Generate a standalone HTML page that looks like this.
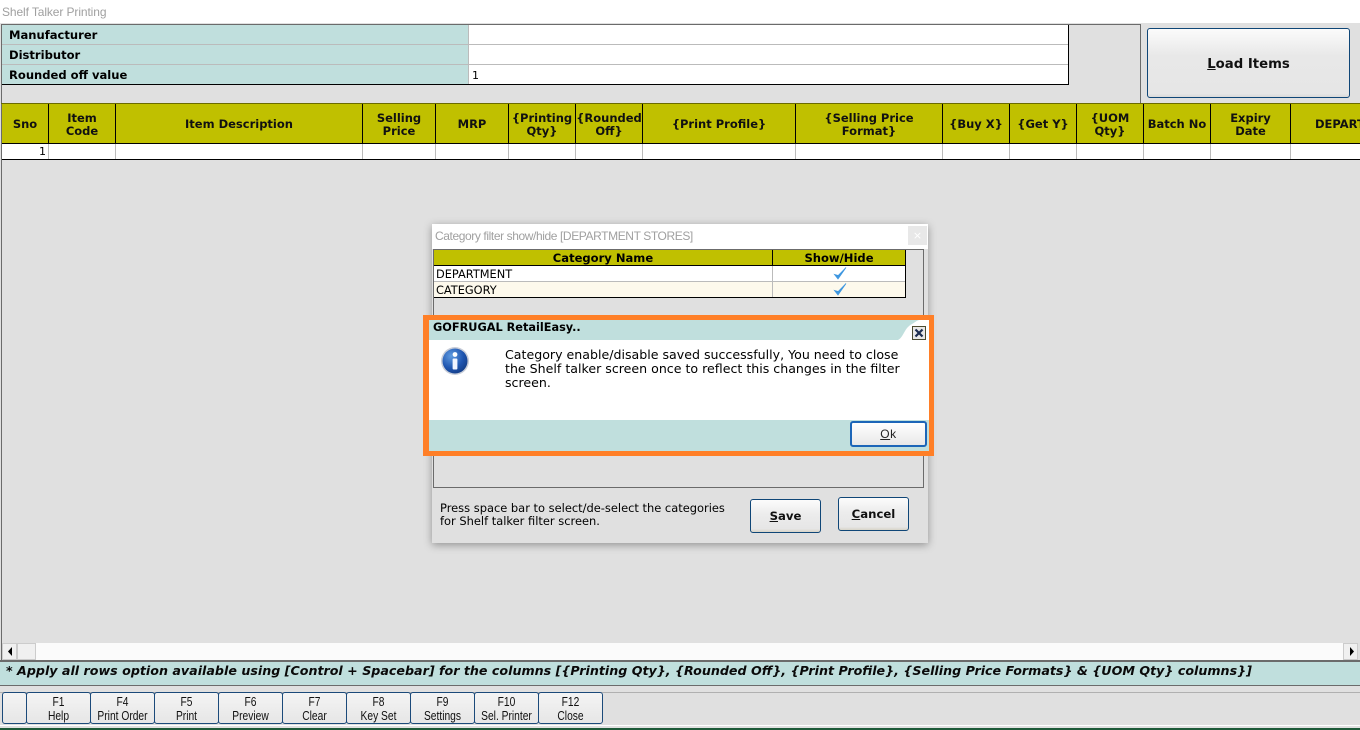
<!DOCTYPE html>
<html><head><meta charset="utf-8"><title>Shelf Talker Printing</title>
<style>
html,body{margin:0;padding:0;width:1360px;height:730px;overflow:hidden;background:#e0e0e0}
body{position:relative;font-family:"DejaVu Sans","Liberation Sans",sans-serif;color:#000}
.a{position:absolute;box-sizing:border-box}
.t{position:absolute;white-space:nowrap;line-height:14px}
.b{font-weight:bold;font-size:11.55px}
.c{text-align:center}
.h{position:absolute;top:104px;display:flex;align-items:center;justify-content:center;text-align:center;font-weight:bold;font-size:11.5px;line-height:13px;padding-top:2px;border-right:1px solid #000;box-sizing:content-box;white-space:nowrap;overflow:hidden;color:#111;height:37px}
.cell{position:absolute;top:144px;height:15px;background:#fff;border-right:1px solid #bbb}
.fk{position:absolute;top:692px;height:32px;width:65px;box-sizing:border-box;border:1px solid #1b4a7a;border-radius:3px;background:linear-gradient(#f4f4f4,#e6e6e6);font-family:"Liberation Sans",sans-serif;font-size:12.5px;line-height:14px;text-align:center;padding-top:2px;color:#111;white-space:nowrap}
.fk span{display:block;transform:scaleX(.82);transform-origin:center}
.btn{position:absolute;box-sizing:border-box;border:1px solid #0f4677;border-radius:3px;background:linear-gradient(#fcfcfc,#ececec 45%,#e6e6e6 90%,#d8d4c8);display:flex;align-items:center;justify-content:center;font-weight:bold;font-size:11.7px;color:#111}
</style></head><body>
<div class="a" style="left:0;top:0;width:1360px;height:23px;background:#fff"></div>
<div class="t" style="left:2px;top:5px;font-family:'Liberation Sans',sans-serif;font-size:12px;letter-spacing:-.1px;color:#a0a0a0">Shelf Talker Printing</div>

<div class="a" style="left:1px;top:24px;width:1140px;height:1px;background:#6b6b6b"></div>
<div class="a" style="left:1px;top:24px;width:1px;height:637px;background:#6b6b6b"></div>
<div class="a" style="left:1140px;top:24px;width:1px;height:79px;background:#6b6b6b"></div>

<div class="a" style="left:2px;top:25px;width:466px;height:59px;background:#c0dfdd"></div>
<div class="a" style="left:469px;top:25px;width:599px;height:59px;background:#fff"></div>
<div class="a" style="left:2px;top:44px;width:1066px;height:1px;background:#bbb"></div>
<div class="a" style="left:2px;top:64px;width:1066px;height:1px;background:#bbb"></div>
<div class="a" style="left:468px;top:25px;width:1px;height:59px;background:#bbb"></div>
<div class="a" style="left:2px;top:84px;width:1067px;height:1px;background:#000"></div>
<div class="a" style="left:1068px;top:25px;width:1px;height:60px;background:#000"></div>
<div class="t b" style="left:9px;top:28px;line-height:15px">Manufacturer</div>
<div class="t b" style="left:9px;top:48px;line-height:15px">Distributor</div>
<div class="t b" style="left:9px;top:68px;line-height:15px">Rounded off value</div>
<div class="t" style="left:472px;top:69px;font-size:11px">1</div>

<div class="btn" style="left:1147px;top:28px;width:203px;height:70px;font-size:13.25px;padding-top:2px;background:linear-gradient(#fbfbfb,#e8e8e8 40%,#e6e6e6 95%,#d9d9d9)"><span><u>L</u>oad Items</span></div>

<div class="a" style="left:1px;top:103px;width:1359px;height:1px;background:#6b6b00"></div>
<div class="a" style="left:2px;top:104px;width:1358px;height:39px;background:#c0c000"></div>
<div class="a" style="left:2px;top:143px;width:1358px;height:1px;background:#000"></div>
<div class="a" style="left:2px;top:159px;width:1358px;height:1px;background:#000"></div>
<div class="a" style="left:2px;top:144px;width:1358px;height:15px;background:#fff"></div>

<div class="h" style="left:2px;width:46px">Sno</div>
<div class="h" style="left:49px;width:66px">Item<br>Code</div>
<div class="h" style="left:116px;width:246px">Item Description</div>
<div class="h" style="left:363px;width:72px">Selling<br>Price</div>
<div class="h" style="left:436px;width:72px">MRP</div>
<div class="h" style="left:509px;width:66px">{Printing<br>Qty}</div>
<div class="h" style="left:576px;width:66px">{Rounded<br>Off}</div>
<div class="h" style="left:643px;width:152px">{Print Profile}</div>
<div class="h" style="left:796px;width:146px">{Selling Price<br>Format}</div>
<div class="h" style="left:943px;width:66px">{Buy X}</div>
<div class="h" style="left:1010px;width:66px">{Get Y}</div>
<div class="h" style="left:1077px;width:66px">{UOM<br>Qty}</div>
<div class="h" style="left:1144px;width:66px">Batch No</div>
<div class="h" style="left:1211px;width:79px">Expiry<br>Date</div>
<div class="h" style="left:1291px;width:69px;border-right:0;justify-content:flex-start;padding-left:24px;box-sizing:border-box;height:39px">DEPARTMENT</div>

<div class="cell" style="left:2px;width:46px"></div>
<div class="cell" style="left:49px;width:66px"></div>
<div class="cell" style="left:116px;width:246px"></div>
<div class="cell" style="left:363px;width:72px"></div>
<div class="cell" style="left:436px;width:72px"></div>
<div class="cell" style="left:509px;width:66px"></div>
<div class="cell" style="left:576px;width:66px"></div>
<div class="cell" style="left:643px;width:152px"></div>
<div class="cell" style="left:796px;width:146px"></div>
<div class="cell" style="left:943px;width:66px"></div>
<div class="cell" style="left:1010px;width:66px"></div>
<div class="cell" style="left:1077px;width:66px"></div>
<div class="cell" style="left:1144px;width:66px"></div>
<div class="cell" style="left:1211px;width:79px"></div>
<div class="t" style="left:39px;top:145px;font-size:11px">1</div>

<!-- Category dialog -->
<div class="a" style="left:432px;top:224px;width:496px;height:319px;background:#e0e0e0;box-shadow:0 2px 8px rgba(0,0,0,.35)"></div>
<div class="a" style="left:432px;top:224px;width:496px;height:25px;background:#fff"></div>
<div class="t" style="left:435px;top:229px;font-family:'Liberation Sans',sans-serif;font-size:12px;letter-spacing:-.4px;color:#a0a0a0">Category filter show/hide [DEPARTMENT STORES]</div>
<div class="a" style="left:908px;top:226px;width:19px;height:19px;background:#e8e8e8;color:#fff;font-size:11px;text-align:center;line-height:19px">×</div>
<div class="a" style="left:433px;top:249px;width:491px;height:239px;border:1px solid #6b6b6b"></div>
<div class="a" style="left:434px;top:250px;width:472px;height:15px;background:#c0c000"></div>
<div class="a" style="left:434px;top:265px;width:472px;height:1px;background:#000"></div>
<div class="a" style="left:434px;top:266px;width:472px;height:16px;background:#fff;border-bottom:1px solid #bbb"></div>
<div class="a" style="left:434px;top:282px;width:472px;height:15px;background:#fdf9ec"></div>
<div class="a" style="left:434px;top:297px;width:472px;height:1px;background:#000"></div>
<div class="a" style="left:905px;top:250px;width:1px;height:48px;background:#000"></div>
<div class="a" style="left:772px;top:250px;width:1px;height:15px;background:#000"></div>
<div class="a" style="left:772px;top:266px;width:1px;height:31px;background:#bbb"></div>
<div class="t b c" style="left:434px;top:251px;width:338px;line-height:15px">Category Name</div>
<div class="t b c" style="left:773px;top:251px;width:132px;line-height:15px">Show/Hide</div>
<div class="t" style="left:436px;top:267px;font-size:11.35px;line-height:15px">DEPARTMENT</div>
<div class="t" style="left:436px;top:283px;font-size:11.35px;line-height:15px">CATEGORY</div>
<svg class="a" style="left:833px;top:266px" width="14" height="15" viewBox="0 0 14 15"><path d="M1.5 8.5 L5 13 L13 1.5 L5.2 9.5 Z" fill="#3f97e0" stroke="#3f97e0" stroke-width=".8"/></svg>
<svg class="a" style="left:833px;top:282px" width="14" height="15" viewBox="0 0 14 15"><path d="M1.5 8.5 L5 13 L13 1.5 L5.2 9.5 Z" fill="#3f97e0" stroke="#3f97e0" stroke-width=".8"/></svg>

<div class="t" style="left:440px;top:501px;font-size:11.45px">Press space bar to select/de-select the categories</div>
<div class="t" style="left:440px;top:514px;font-size:11.45px">for Shelf talker filter screen.</div>
<div class="btn" style="left:750px;top:499px;width:71px;height:34px"><span><u>S</u>ave</span></div>
<div class="btn" style="left:838px;top:497px;width:71px;height:34px"><span><u>C</u>ancel</span></div>

<!-- Message box -->
<div class="a" style="left:423px;top:315px;width:511px;height:141px;border:5px solid #ff7f27;background:#fff;border-left-width:6px"></div>
<div class="a" style="left:429px;top:320px;width:500px;height:20px;background:#c0dfdd"></div>
<svg class="a" style="left:895px;top:320px" width="34" height="20" viewBox="0 0 34 20"><path d="M3 20 C9 17 9 8 17 4 C19 3 21 1 24 0 L34 0 L34 20 Z" fill="#fff"/></svg>
<div class="t b" style="left:433px;top:320px;line-height:15px;font-size:11.3px">GOFRUGAL RetailEasy..</div>
<svg class="a" style="left:912px;top:326px" width="14" height="14" viewBox="0 0 14 14"><rect x=".5" y=".5" width="13" height="13" fill="#e8e8e8" stroke="#4a4a30"/><path d="M3.5 3.5 L10.5 10.5 M10.5 3.5 L3.5 10.5" stroke="#1c2c50" stroke-width="2.2"/></svg>
<svg class="a" style="left:440px;top:346px" width="30" height="30" viewBox="0 0 30 30"><defs><radialGradient id="g" cx=".35" cy=".3" r=".8"><stop offset="0" stop-color="#5f9be0"/><stop offset=".6" stop-color="#1f55b0"/><stop offset="1" stop-color="#123a80"/></radialGradient></defs><circle cx="15" cy="15" r="14" fill="#c8cdd8"/><circle cx="15" cy="15" r="12.5" fill="url(#g)"/><circle cx="15" cy="8.5" r="2.4" fill="#fff"/><rect x="12.6" y="12.5" width="4.8" height="11" rx="1" fill="#f0f4ff"/></svg>
<div class="t" style="left:505px;top:348px;font-size:12.6px">Category enable/disable saved successfully, You need to close</div>
<div class="t" style="left:505px;top:362px;font-size:12.6px">the Shelf talker screen once to reflect this changes in the filter</div>
<div class="t" style="left:505px;top:376px;font-size:12.6px">screen.</div>
<div class="a" style="left:429px;top:420px;width:500px;height:31px;background:#c0dfdd"></div>
<div class="a" style="left:850px;top:421px;width:77px;height:26px;border:2px solid #1c66b8;border-radius:3px;background:linear-gradient(#fff,#e8e8e8);font-family:'Liberation Sans',sans-serif;font-size:12px;text-align:center;line-height:22px;letter-spacing:.6px;color:#222"><u>O</u>k</div>

<!-- scrollbar -->
<div class="a" style="left:2px;top:643px;width:1356px;height:17px;background:#fbfbfb"></div>
<div class="a" style="left:2px;top:643px;width:15px;height:17px;background:#f0f0f0;border:1px solid #ccc"></div>
<div class="a" style="left:17px;top:643px;width:19px;height:17px;background:#f0f0f0;border:1px solid #ccc"></div>
<div class="a" style="left:1343px;top:643px;width:15px;height:17px;background:#f0f0f0;border:1px solid #ccc"></div>
<svg class="a" style="left:6px;top:646px" width="8" height="11"><path d="M6 1 L2 5.5 L6 10 Z" fill="#000"/></svg>
<svg class="a" style="left:1348px;top:646px" width="8" height="11"><path d="M2 1 L6 5.5 L2 10 Z" fill="#000"/></svg>

<div class="a" style="left:0;top:660px;width:1360px;height:26px;background:#c0dfdd;border-top:2px solid #6b6b6b;border-bottom:1px solid #6b6b6b"></div>
<div class="t" style="left:6px;top:664px;font-size:12.66px;font-weight:bold;font-style:italic;color:#0a0a0a;line-height:14px">* Apply all rows option available using [Control + Spacebar] for the columns [{Printing Qty}, {Rounded Off}, {Print Profile}, {Selling Price Formats} &amp; {UOM Qty} columns}]</div>

<div class="a" style="left:0;top:692px;width:1360px;height:1px;background:#b0b0b0"></div>
<div class="fk" style="left:2px;width:25px"></div>
<div class="fk" style="left:26px"><span>F1<br>Help</span></div>
<div class="fk" style="left:90px"><span>F4<br>Print Order</span></div>
<div class="fk" style="left:154px"><span>F5<br>Print</span></div>
<div class="fk" style="left:218px"><span>F6<br>Preview</span></div>
<div class="fk" style="left:282px"><span>F7<br>Clear</span></div>
<div class="fk" style="left:346px"><span>F8<br>Key Set</span></div>
<div class="fk" style="left:410px"><span>F9<br>Settings</span></div>
<div class="fk" style="left:474px"><span>F10<br>Sel. Printer</span></div>
<div class="fk" style="left:538px"><span>F12<br>Close</span></div>
<div class="a" style="left:0;top:725px;width:1360px;height:1px;background:#fff"></div>
<div class="a" style="left:0;top:728px;width:1360px;height:2px;background:#1d5a38"></div>
</body></html>
